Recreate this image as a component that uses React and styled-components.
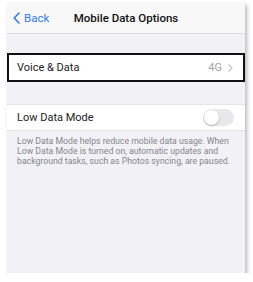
import styled, { createGlobalStyle } from "styled-components";

const GlobalStyle = createGlobalStyle`
  html, body {
    margin: 0;
    padding: 0;
    background: #ffffff;
  }
  body {
    font-family: Roboto, "Noto Sans", sans-serif;
    -webkit-font-smoothing: antialiased;
  }
`;

const Screen = styled.div`
  width: 238px;
  height: 271px;
  margin: 2px 0 0 7px;
  background: #f1f1f6;
  box-shadow: 2px 3px 4px rgba(0, 0, 0, 0.28);
  display: flex;
  flex-direction: column;
`;

const NavBar = styled.div`
  height: 31px;
  background: #f8f8f9;
  border-bottom: 1px solid #dcdce0;
  display: flex;
  align-items: center;
  position: relative;
`;

const BackButton = styled.div`
  display: flex;
  align-items: center;
  gap: 4px;
  padding-left: 6px;
  color: #2f7cf6;
  font-size: 11.5px;
`;

const Title = styled.div`
  position: absolute;
  left: 0;
  right: 0;
  text-align: center;
  font-size: 11.5px;
  font-weight: 500;
  color: #111111;
  pointer-events: none;
`;

const Group = styled.div`
  margin-top: ${(p) => p.$top}px;
`;

const Row = styled.div`
  height: ${(p) => p.$height}px;
  box-sizing: border-box;
  background: #ffffff;
  display: flex;
  align-items: center;
  justify-content: space-between;
  padding: 0 10px 0 ${(p) => (p.$outlined ? 8 : 10)}px;
  border: ${(p) => (p.$outlined ? "2px solid #111111" : "none")};
  border-top: ${(p) => (p.$outlined ? "2px solid #111111" : "1px solid #e4e4e8")};
  border-bottom: ${(p) => (p.$outlined ? "2px solid #111111" : "1px solid #e4e4e8")};
`;

const Label = styled.span`
  font-size: 11px;
  color: #1c1c1e;
`;

const Detail = styled.span`
  display: flex;
  align-items: center;
  gap: 6px;
  font-size: 11px;
  color: #a3a3a8;
`;

const Toggle = styled.div`
  width: 31px;
  height: 17px;
  border-radius: 9px;
  background: #e8e8ea;
  position: relative;
  margin-right: 1px;

  &::after {
    content: "";
    position: absolute;
    left: 1px;
    top: 1px;
    width: 15px;
    height: 15px;
    border-radius: 50%;
    background: #ffffff;
    box-shadow: 0 1px 2px rgba(0, 0, 0, 0.25);
  }
`;

const Note = styled.p`
  margin: 0;
  padding: 5px 8px 0 10px;
  font-size: 8.7px;
  line-height: 10px;
  color: #86868b;
`;

export default function App() {
  return (
    <>
      <GlobalStyle />
      <Screen>
        <NavBar>
          <BackButton>
            <svg width="7" height="12" viewBox="0 0 7 12">
              <path
                d="M6 1 L1.2 6 L6 11"
                fill="none"
                stroke="#2f7cf6"
                strokeWidth="1.6"
                strokeLinecap="round"
                strokeLinejoin="round"
              />
            </svg>
            Back
          </BackButton>
          <Title>Mobile Data Options</Title>
        </NavBar>
        <Group $top={19}>
          <Row $height={29} $outlined>
            <Label>Voice &amp; Data</Label>
            <Detail>
              4G
              <svg width="5" height="8" viewBox="0 0 5 8">
                <path
                  d="M1 1 L4 4 L1 7"
                  fill="none"
                  stroke="#c4c4c8"
                  strokeWidth="1.2"
                  strokeLinecap="round"
                  strokeLinejoin="round"
                />
              </svg>
            </Detail>
          </Row>
        </Group>
        <Group $top={22}>
          <Row $height={27}>
            <Label>Low Data Mode</Label>
            <Toggle />
          </Row>
          <Note>
            Low Data Mode helps reduce mobile data usage. When Low Data Mode is
            turned on, automatic updates and background tasks, such as Photos
            syncing, are paused.
          </Note>
        </Group>
      </Screen>
    </>
  );
}
